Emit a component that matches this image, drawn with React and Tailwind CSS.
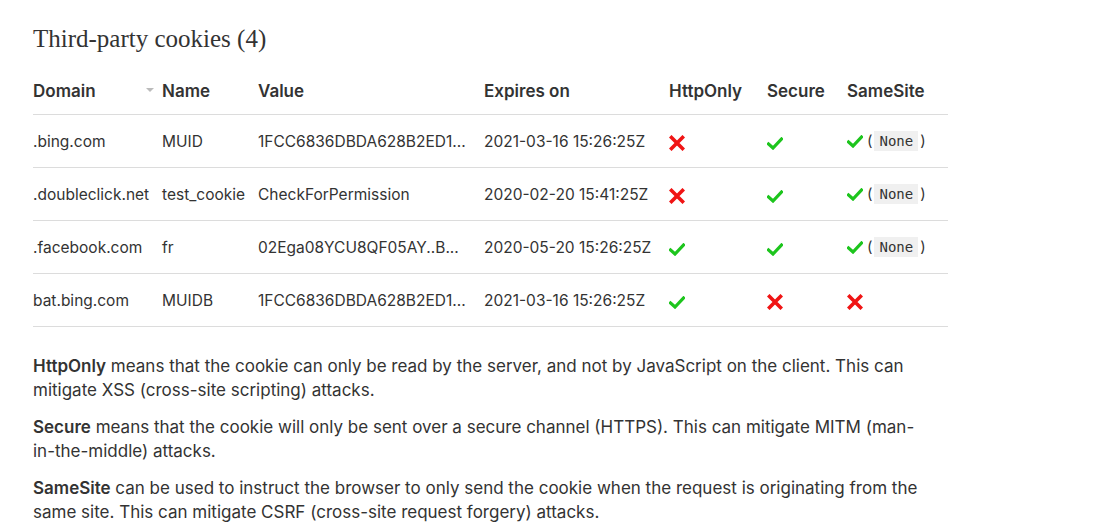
const cookies = [
  { domain: '.bing.com', name: 'MUID', value: '1FCC6836DBDA628B2ED1...', expires: '2021-03-16 15:26:25Z', httpOnly: false, secure: true, sameSite: 'None' },
  { domain: '.doubleclick.net', name: 'test_cookie', value: 'CheckForPermission', expires: '2020-02-20 15:41:25Z', httpOnly: false, secure: true, sameSite: 'None' },
  { domain: '.facebook.com', name: 'fr', value: '02Ega08YCU8QF05AY..B...', expires: '2020-05-20 15:26:25Z', httpOnly: true, secure: true, sameSite: 'None' },
  { domain: 'bat.bing.com', name: 'MUIDB', value: '1FCC6836DBDA628B2ED1...', expires: '2021-03-16 15:26:25Z', httpOnly: true, secure: false, sameSite: null },
];

function Check() {
  return (
    <svg width="16" height="13" viewBox="0 0 16 13" className="inline-block">
      <path d="M1.5 7 L6 11 L14.5 2" fill="none" stroke="#1dc51d" strokeWidth="3.2" strokeLinecap="square" />
    </svg>
  );
}

function Cross() {
  return (
    <svg width="16" height="16" viewBox="0 0 16 16" className="inline-block">
      <path d="M2.5 2.5 L13.5 13.5 M13.5 2.5 L2.5 13.5" fill="none" stroke="#f01414" strokeWidth="3.6" strokeLinecap="square" />
    </svg>
  );
}

function Flag({ on }) {
  return on ? <Check /> : <Cross />;
}

export default function App() {
  const th = 'h-[46px] pt-[2px] text-left align-middle font-semibold text-[17px]';
  const td = 'h-[53px] border-t border-[#dcdcdc] align-middle pt-[3px]';

  return (
    <div className="min-h-[524px] bg-white px-[33px] pt-[24px] text-[#333] font-['Inter',sans-serif]">
      <h2 className="font-['Liberation_Serif',serif] text-[25px] leading-[30px] text-[#333]">Third-party cookies (4)</h2>

      <table className="mt-[14px] w-[915px] table-fixed border-b border-[#dcdcdc] text-[15.5px]">
        <colgroup>
          <col className="w-[129px]" />
          <col className="w-[96px]" />
          <col className="w-[226px]" />
          <col className="w-[185px]" />
          <col className="w-[98px]" />
          <col className="w-[80px]" />
          <col className="w-[101px]" />
        </colgroup>
        <thead>
          <tr>
            <th className={th}>
              <div className="flex items-center justify-between pr-2">
                <span>Domain</span>
                <span className="mt-[-3px] h-0 w-0 border-x-[4px] border-t-[4px] border-x-transparent border-t-[#bbb]" />
              </div>
            </th>
            <th className={th}>Name</th>
            <th className={th}>Value</th>
            <th className={th}>Expires on</th>
            <th className={th}>HttpOnly</th>
            <th className={th}>Secure</th>
            <th className={th}>SameSite</th>
          </tr>
        </thead>
        <tbody>
          {cookies.map((c) => (
            <tr key={c.domain}>
              <td className={td}>{c.domain}</td>
              <td className={td}>{c.name}</td>
              <td className={td}>{c.value}</td>
              <td className={td}>{c.expires}</td>
              <td className={td}>
                <Flag on={c.httpOnly} />
              </td>
              <td className={td}>
                <Flag on={c.secure} />
              </td>
              <td className={td}>
                {c.sameSite ? (
                  <span className="inline-flex items-center gap-1">
                    <Check />
                    <span className="text-[15px]">
                      (<code className="mx-[2px] bg-[#f0f0f0] px-[5px] py-[2px] font-['DejaVu_Sans_Mono',monospace] text-[14px]">{c.sameSite}</code>)
                    </span>
                  </span>
                ) : (
                  <Cross />
                )}
              </td>
            </tr>
          ))}
        </tbody>
      </table>

      <div className="mt-[27px] w-[893px] space-y-[13px] text-[17px] leading-[24px]">
        <p>
          <b className="font-semibold">HttpOnly</b> means that the cookie can only be read by the server, and not by JavaScript on the client. This can mitigate XSS (cross-site scripting) attacks.
        </p>
        <p>
          <b className="font-semibold">Secure</b> means that the cookie will only be sent over a secure channel (HTTPS). This can mitigate MITM (man-in-the-middle) attacks.
        </p>
        <p>
          <b className="font-semibold">SameSite</b> can be used to instruct the browser to only send the cookie when the request is originating from the same site. This can mitigate CSRF (cross-site request forgery) attacks.
        </p>
      </div>
    </div>
  );
}
